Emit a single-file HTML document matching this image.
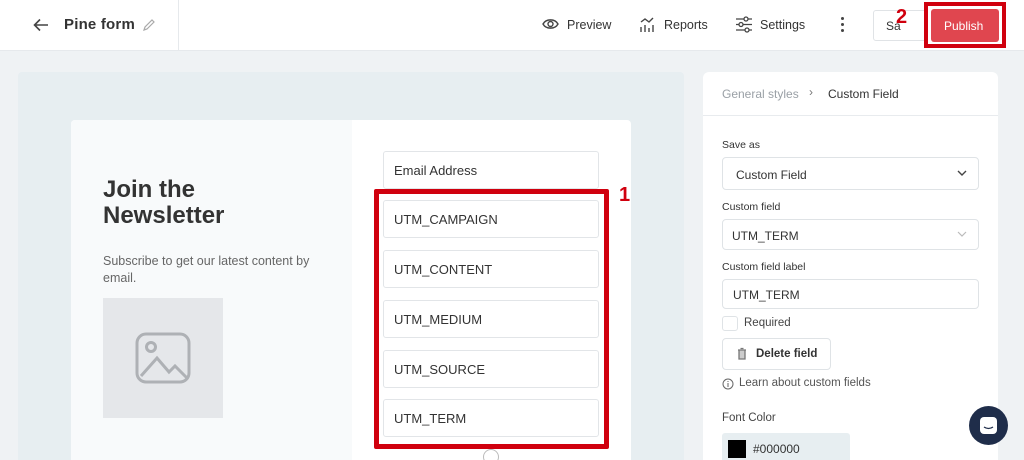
<!DOCTYPE html><html style="width:1024px;height:460px;overflow:hidden"><head><style>
*{margin:0;padding:0;box-sizing:border-box}
body{width:1024px;height:460px;overflow:hidden;background:#eff2f4;font-family:"Liberation Sans",sans-serif;position:relative;color:#333}
.a{position:absolute}
.inp{position:absolute;left:383px;width:216px;height:38px;background:#fff;border:1px solid #e2e5e8;border-radius:3px;font-size:13px;color:#333;padding:11px 0 0 10px}
.lbl{position:absolute;left:722px;font-size:10.5px;color:#333}
.sel{position:absolute;left:722px;width:257px;background:#fff;border:1px solid #dfe3e6;border-radius:4px;font-size:12px;color:#333}
</style></head><body>
<div class="a" style="left:0;top:0;width:1024px;height:51px;background:#fff;border-bottom:1px solid #e6e9ec"></div>
<div class="a" style="left:178px;top:0;width:1px;height:51px;background:#e6e9ec"></div>
<svg class="a" style="left:33px;top:18px" width="16" height="14" viewBox="0 0 16 14"><path d="M15 7H2M7 1.5L1.5 7 7 12.5" stroke="#444" stroke-width="1.6" fill="none"/></svg>
<div class="a" style="left:64px;top:16px;font-size:15px;color:#333;font-weight:bold;letter-spacing:.2px">Pine form</div>
<svg class="a" style="left:141px;top:17px" width="16" height="16" viewBox="0 0 16 16"><path d="M3 13l1-3 7-7 2 2-7 7z" stroke="#aaa" stroke-width="1.2" fill="none"/></svg>
<svg class="a" style="left:542px;top:17px" width="17" height="14" viewBox="0 0 17 14"><path d="M1 7C4 1.5 13 1.5 16 7 13 12.5 4 12.5 1 7z" stroke="#444" stroke-width="1.4" fill="none"/><circle cx="8.5" cy="7" r="2.5" stroke="#444" stroke-width="1.4" fill="none"/></svg>
<div class="a" style="left:567px;top:18px;font-size:12.5px;color:#333">Preview</div>
<svg class="a" style="left:639px;top:16px" width="18" height="17" viewBox="0 0 18 17"><path d="M2 16v-5M6 16v-7M10 16v-4M14 16v-7M2 6l4-3 4 3 4-4" stroke="#444" stroke-width="1.4" fill="none"/></svg>
<div class="a" style="left:664px;top:18px;font-size:12.5px;color:#333">Reports</div>
<svg class="a" style="left:735px;top:16px" width="18" height="17" viewBox="0 0 18 17"><path d="M1 3h16M1 8.5h16M1 14h16" stroke="#444" stroke-width="1.3"/><circle cx="11" cy="3" r="2" fill="#fff" stroke="#444" stroke-width="1.3"/><circle cx="6" cy="8.5" r="2" fill="#fff" stroke="#444" stroke-width="1.3"/><circle cx="12" cy="14" r="2" fill="#fff" stroke="#444" stroke-width="1.3"/></svg>
<div class="a" style="left:760px;top:18px;font-size:12.5px;color:#333">Settings</div>
<div class="a" style="left:841px;top:17px;width:3px"><div style="width:3px;height:3px;background:#444;border-radius:50%;margin-bottom:3px"></div><div style="width:3px;height:3px;background:#444;border-radius:50%;margin-bottom:3px"></div><div style="width:3px;height:3px;background:#444;border-radius:50%"></div></div>
<div class="a" style="left:873px;top:10px;width:56px;height:31px;border:1px solid #e0e3e6;border-radius:3px;font-size:12px;padding:8px 0 0 12px">Sa</div>
<div class="a" style="left:896px;top:6px;font-size:20px;font-weight:bold;color:#d0000e">2</div>
<div class="a" style="left:924px;top:2px;width:82px;height:46px;border:4px solid #d0000e;background:#fff"></div>
<div class="a" style="left:931px;top:9px;width:68px;height:33px;background:#e0464f;border-radius:3px;color:#fff;font-size:12px;padding:10px 0 0 13px">Publish</div>

<div class="a" style="left:18px;top:72px;width:666px;height:388px;background:#e7eef1;border-radius:4px 4px 0 0"></div>
<div class="a" style="left:71px;top:120px;width:560px;height:340px;background:#fff;border-radius:4px 4px 0 0"></div>
<div class="a" style="left:71px;top:120px;width:281px;height:340px;background:#f8fafb;border-radius:4px 0 0 0"></div>
<div class="a" style="left:103px;top:177px;font-size:24px;font-weight:bold;line-height:26px;color:#333">Join the<br>Newsletter</div>
<div class="a" style="left:103px;top:253px;width:230px;font-size:12.5px;line-height:17px;color:#666">Subscribe to get our latest content by email.</div>
<div class="a" style="left:103px;top:298px;width:120px;height:120px;background:#e5e7ea"></div>
<svg class="a" style="left:135px;top:332px" width="56" height="52" viewBox="0 0 56 52"><rect x="2" y="2" width="52" height="48" rx="9" stroke="#aeb1b5" stroke-width="3" fill="none"/><circle cx="16" cy="15" r="4.5" stroke="#aeb1b5" stroke-width="3" fill="none"/><path d="M6 44l16-18 12 14 6-6 12 12" stroke="#aeb1b5" stroke-width="3" fill="none"/></svg>
<div class="inp" style="top:151px">Email Address</div>
<div class="inp" style="top:200px">UTM_CAMPAIGN</div>
<div class="inp" style="top:250px">UTM_CONTENT</div>
<div class="inp" style="top:300px">UTM_MEDIUM</div>
<div class="inp" style="top:350px">UTM_SOURCE</div>
<div class="inp" style="top:399px">UTM_TERM</div>
<div class="a" style="left:374px;top:189px;width:235px;height:260px;border:5px solid #d0000e;border-radius:2px"></div>
<div class="a" style="left:619px;top:184px;font-size:20px;font-weight:bold;color:#d0000e">1</div>
<div class="a" style="left:483px;top:449px;width:16px;height:16px;border:1px solid #bbb;border-radius:50%;background:#fff"></div>

<div class="a" style="left:703px;top:72px;width:295px;height:388px;background:#fff;border-radius:6px 6px 0 0"></div>
<div class="a" style="left:703px;top:115px;width:295px;height:1px;background:#e8ebee"></div>
<div class="a" style="left:722px;top:87px;font-size:12px;color:#9aa0a6">General styles</div>
<div class="a" style="left:809px;top:85px;font-size:12px;color:#777">›</div>
<div class="a" style="left:828px;top:87px;font-size:12px;color:#333">Custom Field</div>
<div class="lbl" style="top:139px">Save as</div>
<div class="sel" style="top:157px;height:33px;padding:10px 0 0 13px">Custom Field</div>
<svg class="a" style="left:957px;top:170px" width="10" height="7"><path d="M1 1l4 4 4-4" stroke="#444" stroke-width="1.4" fill="none"/></svg>
<div class="lbl" style="top:201px">Custom field</div>
<div class="sel" style="top:219px;height:31px;padding:9px 0 0 9px">UTM_TERM</div>
<svg class="a" style="left:957px;top:231px" width="10" height="7"><path d="M1 1l4 4 4-4" stroke="#bbb" stroke-width="1.2" fill="none"/></svg>
<div class="lbl" style="top:261px">Custom field label</div>
<div class="sel" style="top:279px;height:30px;padding:8px 0 0 10px">UTM_TERM</div>
<div class="a" style="left:722px;top:316px;width:16px;height:15px;border:1px solid #dfe3e6;border-radius:3px"></div>
<div class="a" style="left:744px;top:317px;font-size:11.5px;color:#444">Required</div>
<div class="a" style="left:722px;top:338px;width:109px;height:32px;border:1px solid #dfe3e6;border-radius:4px;font-size:11.5px;font-weight:bold;padding:9px 0 0 33px">Delete field</div>
<svg class="a" style="left:737px;top:347px" width="10" height="13"><path d="M1 3h8M3.5 1.5h3M2 3.5v8.5h6V3.5" stroke="#777" stroke-width="1.3" fill="#ccc"/></svg>
<svg class="a" style="left:722px;top:378px" width="12" height="12"><circle cx="6" cy="6" r="5" stroke="#666" fill="none"/><path d="M6 5v4M6 3v1" stroke="#666"/></svg>
<div class="a" style="left:739px;top:377px;font-size:11.5px;color:#555">Learn about custom fields</div>
<div class="a" style="left:722px;top:412px;font-size:11.5px;color:#444">Font Color</div>
<div class="a" style="left:722px;top:433px;width:128px;height:27px;background:#e7eef1;border-radius:3px 3px 0 0"></div>
<div class="a" style="left:728px;top:440px;width:18px;height:18px;background:#000"></div>
<div class="a" style="left:753px;top:442px;font-size:12px;color:#333">#000000</div>
<div class="a" style="left:969px;top:406px;width:39px;height:39px;background:#1f2d4a;border-radius:50%"></div>
<svg class="a" style="left:979px;top:416px" width="19" height="19"><rect x="1" y="1" width="17" height="17" rx="4" fill="#fff"/><path d="M5 11q4.5 3 9 0" stroke="#1f2d4a" stroke-width="1.3" fill="none"/></svg>
</body></html>
